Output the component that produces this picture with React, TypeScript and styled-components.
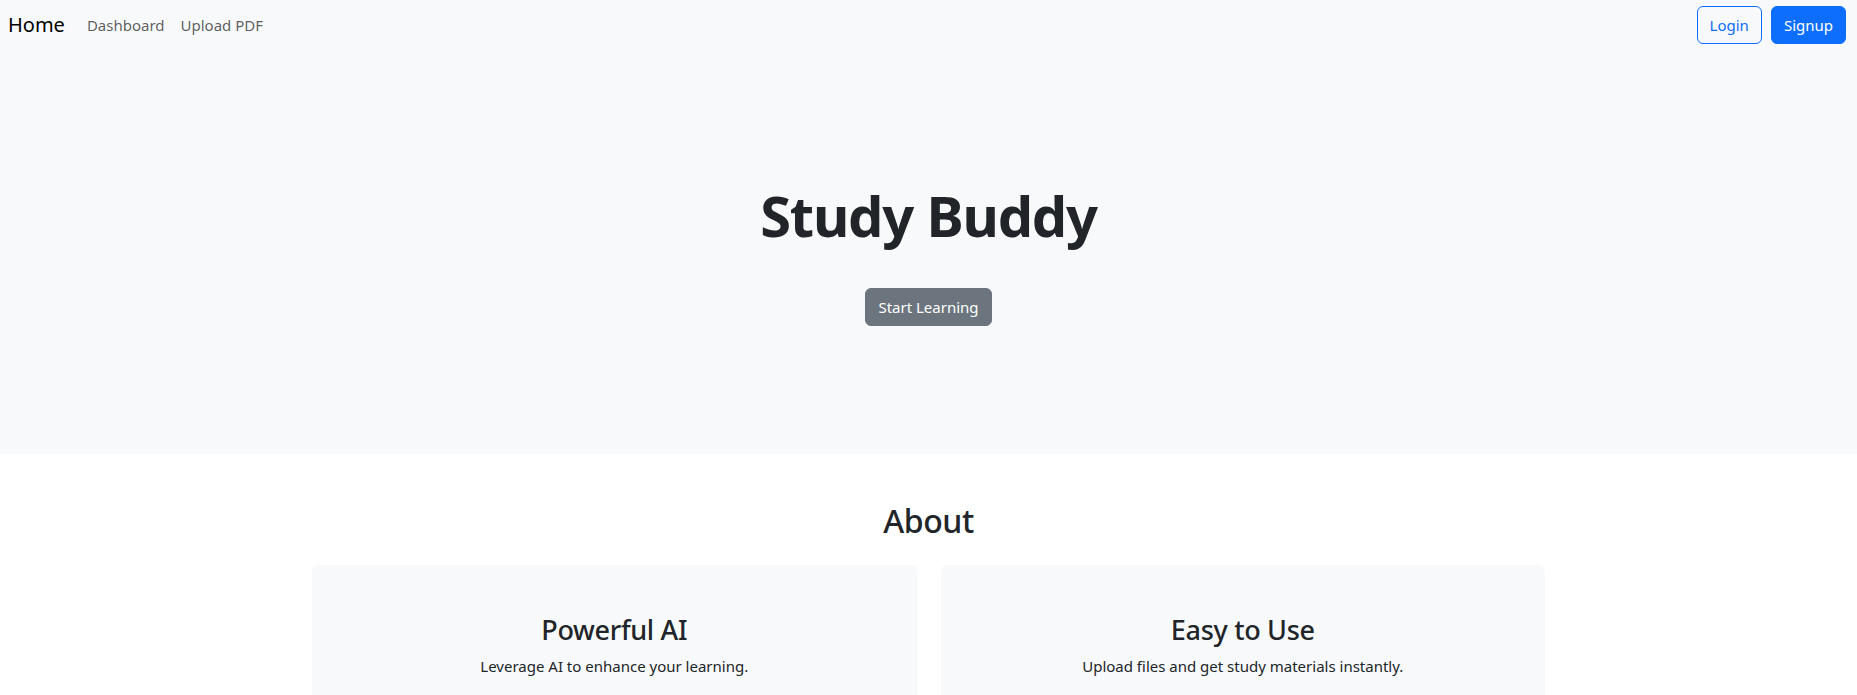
import React from "react";
import styled, { createGlobalStyle } from "styled-components";

const GlobalStyle = createGlobalStyle`
  *, *::before, *::after { box-sizing: border-box; }
  html, body { margin: 0; padding: 0; }
  body {
    font-family: "Noto Sans", "Open Sans", Arial, sans-serif;
    font-size: 16px;
    line-height: 1.5;
    color: #212529;
    background: #ffffff;
  }
`;

const Top = styled.div`
  background: #f8f9fa;
`;

const Nav = styled.nav`
  height: 50px;
  display: flex;
  align-items: center;
  justify-content: space-between;
  padding: 0 11px 0 8px;
`;

const NavLeft = styled.div`
  display: flex;
  align-items: center;
`;

const Brand = styled.a`
  font-size: 20px;
  color: #000;
  text-decoration: none;
  margin-right: 14px;
  line-height: 1.5;
`;

const NavLink = styled.a`
  font-size: 15px;
  color: rgba(0, 0, 0, 0.65);
  text-decoration: none;
  padding: 0 8px;
`;

const NavRight = styled.div`
  display: flex;
  align-items: center;
  gap: 9px;
`;

const Button = styled.button<{ $variant: "outline" | "primary" | "secondary" }>`
  font-family: inherit;
  font-size: 15px;
  line-height: 1.5;
  height: 38px;
  padding: 0 12px;
  border-radius: 6px;
  cursor: pointer;
  border: 1px solid
    ${(p) => (p.$variant === "secondary" ? "#6c757d" : "#0d6efd")};
  background: ${(p) =>
    p.$variant === "outline"
      ? "transparent"
      : p.$variant === "primary"
      ? "#0d6efd"
      : "#6c757d"};
  color: ${(p) => (p.$variant === "outline" ? "#0d6efd" : "#ffffff")};
`;

const Hero = styled.header`
  height: 404px;
  padding-top: 129px;
  display: flex;
  flex-direction: column;
  align-items: center;
`;

const HeroTitle = styled.h1`
  margin: 0 0 37px;
  font-size: 56px;
  font-weight: 700;
  letter-spacing: -1.2px;
  line-height: 72px;
  color: #212529;
`;

const About = styled.section`
  padding-top: 46px;
  display: flex;
  flex-direction: column;
  align-items: center;
`;

const AboutTitle = styled.h2`
  margin: 0 0 23px;
  font-size: 32px;
  font-weight: 500;
  letter-spacing: -0.4px;
  line-height: 42px;
`;

const CardRow = styled.div`
  width: 1233px;
  display: grid;
  grid-template-columns: 1fr 1fr;
  gap: 24px;
`;

const Card = styled.div`
  background: #f8f9fa;
  border-radius: 6px;
  padding: 47px 24px 48px;
  text-align: center;
`;

const CardTitle = styled.h3`
  margin: 0 0 6px;
  font-size: 27px;
  font-weight: 500;
  letter-spacing: -0.3px;
  line-height: 36px;
`;

const CardText = styled.p`
  margin: 0;
  font-size: 15px;
  line-height: 24px;
`;

export default function App() {
  return (
    <>
      <GlobalStyle />
      <Top>
        <Nav>
          <NavLeft>
            <Brand href="#">Home</Brand>
            <NavLink href="#">Dashboard</NavLink>
            <NavLink href="#">Upload PDF</NavLink>
          </NavLeft>
          <NavRight>
            <Button $variant="outline">Login</Button>
            <Button $variant="primary">Signup</Button>
          </NavRight>
        </Nav>
        <Hero>
          <HeroTitle>Study Buddy</HeroTitle>
          <Button $variant="secondary">Start Learning</Button>
        </Hero>
      </Top>
      <About>
        <AboutTitle>About</AboutTitle>
        <CardRow>
          <Card>
            <CardTitle>Powerful AI</CardTitle>
            <CardText>Leverage AI to enhance your learning.</CardText>
          </Card>
          <Card>
            <CardTitle>Easy to Use</CardTitle>
            <CardText>Upload files and get study materials instantly.</CardText>
          </Card>
        </CardRow>
      </About>
    </>
  );
}
